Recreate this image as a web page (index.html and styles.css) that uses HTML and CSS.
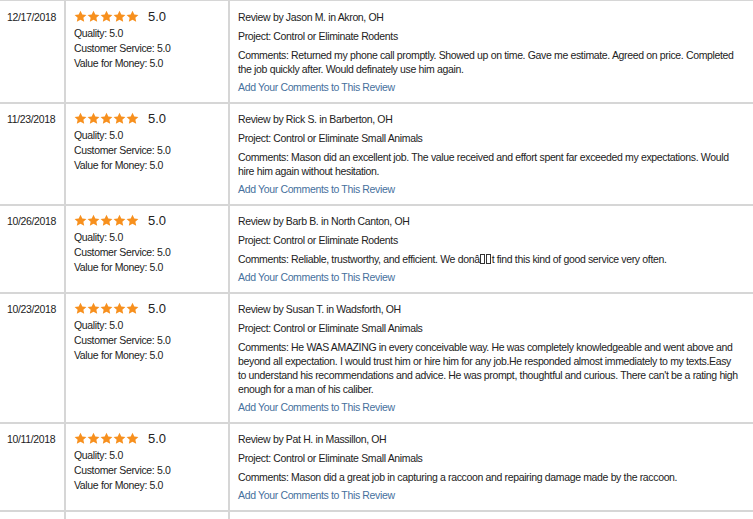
FILE: index.html
```html
<!DOCTYPE html>
<html>
<head>
<meta charset="utf-8">
<link rel="stylesheet" href="styles.css">
</head>
<body>
<svg width="0" height="0" class="defs">
  <defs>
    <symbol id="star" viewBox="0 0 24 24">
      <path d="M12 1.2l3.3 7 7.6.9-5.6 5.2 1.5 7.6L12 18.1l-6.8 3.8 1.5-7.6L1.1 9.1l7.6-.9z" fill="#f7901e"/>
    </symbol>
  </defs>
</svg>
<table class="reviews">
  <colgroup><col class="c-date"><col class="c-rate"><col class="c-text"></colgroup>
  <tr>
    <td class="date">12/17/2018</td>
    <td class="rate">
      <div class="stars"><svg><use href="#star"/></svg><svg><use href="#star"/></svg><svg><use href="#star"/></svg><svg><use href="#star"/></svg><svg><use href="#star"/></svg><span class="score">5.0</span></div>
      <div class="sub">Quality: 5.0</div>
      <div class="sub">Customer Service: 5.0</div>
      <div class="sub">Value for Money: 5.0</div>
    </td>
    <td class="text">
      <p>Review by Jason M. in Akron, OH</p>
      <p>Project: Control or Eliminate Rodents</p>
      <p>Comments: Returned my phone call promptly. Showed up on time. Gave me estimate. Agreed on price. Completed the job quickly after. Would definately use him again.</p>
      <a class="add">Add Your Comments to This Review</a>
    </td>
  </tr>
  <tr>
    <td class="date">11/23/2018</td>
    <td class="rate">
      <div class="stars"><svg><use href="#star"/></svg><svg><use href="#star"/></svg><svg><use href="#star"/></svg><svg><use href="#star"/></svg><svg><use href="#star"/></svg><span class="score">5.0</span></div>
      <div class="sub">Quality: 5.0</div>
      <div class="sub">Customer Service: 5.0</div>
      <div class="sub">Value for Money: 5.0</div>
    </td>
    <td class="text">
      <p>Review by Rick S. in Barberton, OH</p>
      <p>Project: Control or Eliminate Small Animals</p>
      <p>Comments: Mason did an excellent job. The value received and effort spent far exceeded my expectations. Would hire him again without hesitation.</p>
      <a class="add">Add Your Comments to This Review</a>
    </td>
  </tr>
  <tr>
    <td class="date">10/26/2018</td>
    <td class="rate">
      <div class="stars"><svg><use href="#star"/></svg><svg><use href="#star"/></svg><svg><use href="#star"/></svg><svg><use href="#star"/></svg><svg><use href="#star"/></svg><span class="score">5.0</span></div>
      <div class="sub">Quality: 5.0</div>
      <div class="sub">Customer Service: 5.0</div>
      <div class="sub">Value for Money: 5.0</div>
    </td>
    <td class="text">
      <p>Review by Barb B. in North Canton, OH</p>
      <p>Project: Control or Eliminate Rodents</p>
      <p>Comments: Reliable, trustworthy, and efficient. We donâ<span class="tofu"></span><span class="tofu"></span>t find this kind of good service very often.</p>
      <a class="add">Add Your Comments to This Review</a>
    </td>
  </tr>
  <tr>
    <td class="date">10/23/2018</td>
    <td class="rate">
      <div class="stars"><svg><use href="#star"/></svg><svg><use href="#star"/></svg><svg><use href="#star"/></svg><svg><use href="#star"/></svg><svg><use href="#star"/></svg><span class="score">5.0</span></div>
      <div class="sub">Quality: 5.0</div>
      <div class="sub">Customer Service: 5.0</div>
      <div class="sub">Value for Money: 5.0</div>
    </td>
    <td class="text">
      <p>Review by Susan T. in Wadsforth, OH</p>
      <p>Project: Control or Eliminate Small Animals</p>
      <p>Comments: He WAS AMAZING in every conceivable way. He was completely knowledgeable and went above and beyond all expectation. I would trust him or hire him for any job.He responded almost immediately to my texts.Easy to&nbsp;understand his recommendations and advice. He was prompt, thoughtful and curious. There can't be a rating high enough for a man of his caliber.</p>
      <a class="add">Add Your Comments to This Review</a>
    </td>
  </tr>
  <tr>
    <td class="date">10/11/2018</td>
    <td class="rate">
      <div class="stars"><svg><use href="#star"/></svg><svg><use href="#star"/></svg><svg><use href="#star"/></svg><svg><use href="#star"/></svg><svg><use href="#star"/></svg><span class="score">5.0</span></div>
      <div class="sub">Quality: 5.0</div>
      <div class="sub">Customer Service: 5.0</div>
      <div class="sub">Value for Money: 5.0</div>
    </td>
    <td class="text">
      <p>Review by Pat H. in Massillon, OH</p>
      <p>Project: Control or Eliminate Small Animals</p>
      <p>Comments: Mason did a great job in capturing a raccoon and repairing damage made by the raccoon.</p>
      <a class="add">Add Your Comments to This Review</a>
    </td>
  </tr>
  <tr class="next">
    <td></td><td></td><td></td>
  </tr>
</table>
</body>
</html>
```
FILE: styles.css
```css
html, body {
  margin: 0;
  padding: 0;
  background: #fff;
}
body {
  font-family: "Liberation Sans", Arial, sans-serif;
  font-size: 10.5px;
  letter-spacing: -0.35px;
  color: #222;
  overflow: hidden;
}
.defs {
  position: absolute;
  width: 0;
  height: 0;
}
.reviews {
  border-collapse: collapse;
  width: 755px;
  table-layout: fixed;
}
.c-date { width: 65px; }
.c-rate { width: 164px; }
.reviews td {
  border: 2px solid #d6d6d6;
  vertical-align: top;
  padding: 8px 8px 8px 8px;
  line-height: 14px;
}
.reviews tr:first-child td { border-top-width: 1px; padding-top: 9px; }
.reviews td:first-child { border-left: none; }
.reviews td.date {
  padding-left: 7px;
  padding-right: 0;
}
.reviews td.rate {
  padding-top: 8px;
}
.stars {
  display: flex;
  align-items: flex-start;
  height: 16px;
}
.stars svg {
  width: 13px;
  height: 13px;
  flex: none;
}
.score {
  font-size: 13px;
  line-height: 13px;
  letter-spacing: 0;
  margin-left: 9px;
}
.sub {
  line-height: 15px;
}
.text p {
  margin: 0 0 5px 0;
}
.text p:nth-of-type(3) {
  margin-bottom: 4px;
}
.add {
  display: block;
  color: #46709d;
  text-decoration: none;
}
.tofu {
  display: inline-block;
  width: 3px;
  height: 8px;
  border: 1px solid #333;
  margin: 0 1px 0 0;
  vertical-align: -1px;
}
.next td {
  height: 10px;
  padding: 0;
}
```
